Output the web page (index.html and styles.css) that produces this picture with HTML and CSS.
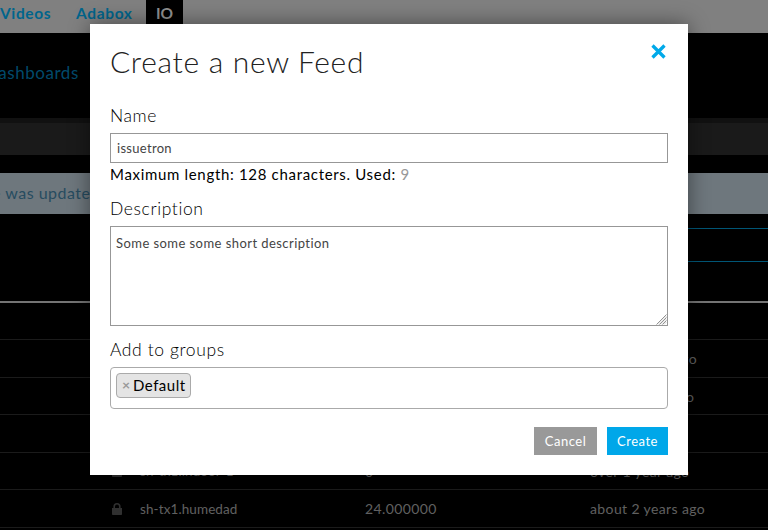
FILE: index.html
```html
<!DOCTYPE html>
<html lang="en">
<head>
<meta charset="utf-8">
<title>Create a new Feed</title>
<link rel="stylesheet" href="styles.css">
</head>
<body>
<div class="page">
  <nav class="topbar"><a class="videos">Videos</a><a class="adabox">Adabox</a><a class="io">IO</a></nav>
  <header class="subnav"><a>Dashboards</a></header>
  <div class="strip"></div>
  <div class="alert"><span>e was updated</span></div>
  <div class="toolbar"><div class="toolbar-box"></div></div>
  <div class="table">
    <div class="row"></div>
    <div class="row"><span></span><span></span><span></span><span class="date later">1 year ago</span></div>
    <div class="row"><span></span><span></span><span></span><span class="date over">over 1 year ago</span></div>
    <div class="row"></div>
    <div class="row"><svg class="lock" viewBox="0 0 10 12"><path d="M0 5h10v6.2q0 .8-.8.8H.8Q0 12 0 11.2z"/><path class="shackle" d="M2.2 6V3.6a2.8 2.8 0 0 1 5.6 0V6"/></svg><span class="feed">sh-tx1.indoor-1</span><span class="value">0</span><span class="date">over 1 year ago</span></div>
    <div class="row"><svg class="lock" viewBox="0 0 10 12"><path d="M0 5h10v6.2q0 .8-.8.8H.8Q0 12 0 11.2z"/><path class="shackle" d="M2.2 6V3.6a2.8 2.8 0 0 1 5.6 0V6"/></svg><span class="feed">sh-tx1.humedad</span><span class="value">24.000000</span><span class="date">about 2 years ago</span></div>
  </div>
</div>
<form class="modal">
  <div class="modal-head">
    <h1>Create a new Feed</h1>
    <svg class="close" viewBox="0 0 15 15"><path d="M1.5 1.5 13.5 13.5M13.5 1.5 1.5 13.5"/></svg>
  </div>
  <label class="l-name" for="name">Name</label>
  <input id="name" type="text" value="issuetron">
  <p class="hint"><span>Maximum length: 128 characters. Used:</span> <span class="used">9</span></p>
  <label class="l-desc" for="desc">Description</label>
  <div class="area"><textarea id="desc">Some some some short description</textarea><svg class="grip" viewBox="0 0 11 11"><path d="M.5 10.5l10-10M3.5 10.5l7-7M6.5 10.5l4-4"/><path class="fine" d="M2 10.5L10.5 2M5 10.5L10.5 5M8 10.5L10.5 8"/></svg></div>
  <label class="l-groups">Add to groups</label>
  <div class="groups"><span class="tag"><b>×</b><span>Default</span></span></div>
  <div class="actions"><button type="button" class="cancel">Cancel</button><button type="button" class="create">Create</button></div>
</form>
</body>
</html>
```
FILE: styles.css
```css
* { box-sizing: border-box; }
body { margin: 0; height: 530px; overflow: hidden; background: #000; font-family: Lato, "Open Sans", sans-serif; font-variant-ligatures: none; }
.page { height: 530px; overflow: hidden; }
.topbar { display: flex; height: 33px; background: #808080; font-size: 15.5px; font-weight: 700; line-height: 27px; color: #00658c; }
.videos { width: 76px; letter-spacing: .6px; }
.adabox { width: 70px; letter-spacing: .65px; }
.io { width: 37px; padding-left: 10px; background: #000; color: #909090; }
.subnav { display: flex; height: 85px; align-items: center; font-size: 17px; line-height: 24px; letter-spacing: .55px; color: #004a6c; }
.subnav a { margin: -5px 0 0 -15px; }
.strip { height: 37px; border-top: 5px solid #111; background: #1a1a1a; }
.alert { display: flex; height: 41px; margin-top: 18px; align-items: center; background: #6e777d; color: #274c60; font-size: 16px; letter-spacing: .5px; }
.alert span { margin: -2px 0 0 -8px; }
.toolbar { height: 87px; padding: 14px 0 0 400px; }
.toolbar-box { height: 34px; border: solid #005676; border-width: 1px 0; }
.table { border-top: 2px solid #747474; }
.row { display: grid; grid-template-columns: 28px 225px 225px 1fr; height: 37px; padding-left: 112px; align-items: center; border-bottom: 1px solid #1b1b1b; font-size: 14px; letter-spacing: .38px; color: #606060; }
.row:nth-child(even) { height: 38px; }
.feed { font-size: 13.5px; letter-spacing: .1px; }
.later { padding-left: 40px; }
.over { padding-left: 5px; }
.lock { width: 10px; height: 12px; fill: #303030; }
.shackle { fill: none; stroke: #303030; stroke-width: 1.6; }
.modal { position: absolute; top: 24px; left: 90px; width: 598px; height: 451px; padding: 20px; display: flex; flex-direction: column; background: #fff; color: #111; box-shadow: 0 0 20px rgba(0,0,0,.45); }
.modal-head { display: flex; height: 60px; justify-content: space-between; }
h1 { margin: -1px 0 0; font-size: 30px; font-weight: 300; line-height: 36px; letter-spacing: .68px; color: #222; }
.close { width: 15px; height: 15px; margin: 0 2px 0 0; stroke: #00a9e9; stroke-width: 3.3; fill: none; }
label { height: 29px; font-size: 17.5px; font-weight: 300; line-height: 23px; letter-spacing: .6px; color: #000; }
input { height: 30px; padding: 0 6px 1px; border: 1px solid #979797; border-radius: 0; background: #fff; font: 13px Lato, sans-serif; letter-spacing: .3px; color: #444; outline: 0; }
.hint { height: 34px; margin: 0; font-size: 15px; line-height: 23px; letter-spacing: .68px; color: #000; }
.used { color: #999; }
.area { position: relative; height: 100px; }
textarea { display: block; width: 100%; height: 100px; padding: 8px 5px; border: 1px solid #979797; border-radius: 0; font: 13px/16px Lato, sans-serif; letter-spacing: .44px; color: #444; resize: none; outline: 0; }
.grip { position: absolute; right: 1px; bottom: 1px; width: 11px; height: 11px; fill: none; stroke: #777; stroke-width: .8; }
.fine { stroke: #bbb; stroke-width: .5; }
.l-groups { margin-top: 12px; }
.groups { height: 42px; padding: 5px; border: 1px solid #aaa; border-radius: 4px; }
.tag { display: flex; width: 75px; height: 25px; padding: 0 0 2px 5px; align-items: center; border: 1px solid #aaa; border-radius: 4px; background: #e4e4e4; font-size: 15px; letter-spacing: .5px; color: #000; }
.tag b { width: 11px; font-size: 14px; line-height: 20px; color: #999; letter-spacing: 0; }
.actions { display: flex; height: 28px; margin-top: 18px; justify-content: flex-end; gap: 10px; }
button { width: 61px; padding: 0; border: 0; font: 13px/28px Lato, sans-serif; letter-spacing: .5px; color: #fff; background: #00a7e9; }
.cancel { width: 63px; background: #999; }
```
